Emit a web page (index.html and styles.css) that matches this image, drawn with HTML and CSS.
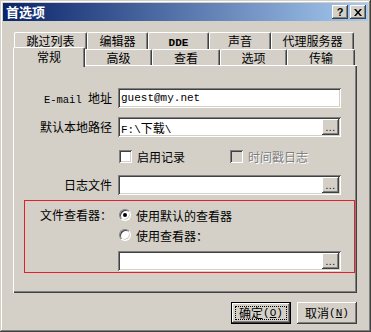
FILE: index.html
```html
<!DOCTYPE html>
<html lang="zh-CN">
<head>
    <meta charset="UTF-8">
    <meta name="viewport" content="width=device-width, initial-scale=1.0">
    <title>首选项</title>
    <link rel="stylesheet" href="styles.css">
</head>
<body>
    <div class="window">
        <div class="titlebar">
            <span class="title">首选项</span>
            <div class="title-buttons">
                <span class="title-btn help">?</span>
                <span class="title-btn">
                    <svg width="8" height="7" viewBox="0 0 8 7"><path d="M0 0h2l2 2.5L6 0h2L5 3.5 8 7H6L4 4.5 2 7H0l3-3.5z" fill="#000"/></svg>
                </span>
            </div>
        </div>

        <div class="tabs">
            <div class="tab-row back">
                <div class="tab">跳过列表</div>
                <div class="tab">编辑器</div>
                <div class="tab"><span class="en">DDE</span></div>
                <div class="tab">声音</div>
                <div class="tab">代理服务器</div>
            </div>
            <div class="tab-row front">
                <div class="tab active">常规</div>
                <div class="tab">高级</div>
                <div class="tab">查看</div>
                <div class="tab">选项</div>
                <div class="tab">传输</div>
            </div>
        </div>

        <div class="panel">
            <div class="form">
                <div class="label"><span class="en">E-mail </span>地址</div>
                <div class="field"><span class="value en">guest@my.net</span></div>

                <div class="label">默认本地路径</div>
                <div class="field">
                    <span class="value"><span class="en">F:\</span>下载<span class="en">\</span></span>
                    <span class="browse">...</span>
                </div>

                <div></div>
                <div class="checks">
                    <div class="check"><span class="box"></span>启用记录</div>
                    <div class="check disabled"><span class="box"></span>时间戳日志</div>
                </div>

                <div class="label">日志文件</div>
                <div class="field"><span class="value"></span><span class="browse">...</span></div>
            </div>

            <div class="viewer">
                <div class="label">文件查看器：</div>
                <div class="radio-row"><span class="radio checked"></span>使用默认的查看器</div>
                <div></div>
                <div class="radio-row"><span class="radio"></span>使用查看器：</div>
                <div></div>
                <div class="field viewer-field"><span class="value"></span><span class="browse">...</span></div>
            </div>
        </div>

        <div class="footer">
            <div class="button default"><span class="focus">确定<span class="en">(<u>O</u>)</span></span></div>
            <div class="button"><span class="focus plain">取消<span class="en">(<u>N</u>)</span></span></div>
        </div>
    </div>
</body>
</html>
```

FILE: styles.css
```css
body {
    margin: 0;
    background-color: #d4d0c8;
    font-family: "Noto Sans CJK SC", "DejaVu Sans", sans-serif;
    font-size: 12px;
    color: #000;
}

.en {
    font-family: "Liberation Mono", monospace;
    font-size: 11px;
}

.window {
    width: 371px;
    height: 332px;
    box-sizing: border-box;
    padding: 3px;
    display: flex;
    flex-direction: column;
    box-shadow: inset -1px -1px #404040, inset 1px 1px #d4d0c8, inset -2px -2px #808080, inset 2px 2px #fff;
}

/* title bar */
.titlebar {
    height: 18px;
    display: flex;
    align-items: center;
    justify-content: space-between;
    padding: 0 2px 0 3px;
    background: linear-gradient(to right, #0a246a, #a6caf0);
}

.title {
    color: #fff;
    font-weight: bold;
    font-size: 13px;
    line-height: 18px;
}

.title-buttons {
    display: flex;
    gap: 2px;
}

.title-btn {
    width: 16px;
    height: 14px;
    box-sizing: border-box;
    display: flex;
    align-items: center;
    justify-content: center;
    background-color: #d4d0c8;
    box-shadow: inset -1px -1px #404040, inset 1px 1px #fff, inset -2px -2px #808080;
}

.title-btn.help {
    font-family: "Liberation Sans", sans-serif;
    font-weight: bold;
    font-size: 11px;
    line-height: 14px;
}

/* tabs */
.tabs {
    margin-top: 11px;
    padding-left: 10px;
}

.tab-row {
    display: grid;
    height: 17px;
}

.tab-row.back {
    grid-template-columns: 73px 61px 61px 62px 83px;
    margin-left: 1px;
}

.tab-row.front {
    grid-template-columns: 72px 67px 68px 67px 68px;
    height: 16px;
}

.tab {
    box-sizing: border-box;
    height: 17px;
    text-align: center;
    line-height: 16px;
    border-top: 1px solid #fff;
    border-left: 1px solid #fff;
    border-right: 1px solid #404040;
    border-radius: 2px 2px 0 0;
    box-shadow: inset -1px 0 #808080;
    background-color: #d4d0c8;
}

.tab .en {
    font-weight: bold;
}

.front .tab {
    height: 16px;
    line-height: 15px;
}

.front .tab.active {
    position: relative;
    z-index: 1;
    height: 20px;
    margin-top: -2px;
    line-height: 17px;
}

/* panel */
.panel {
    margin-left: 10px;
    width: 344px;
    box-sizing: border-box;
    padding: 23px 0 20px 0;
    box-shadow: inset 1px 1px #fff, inset -1px -1px #404040, inset -2px -2px #808080;
}

.form {
    display: grid;
    grid-template-columns: 99px 223px;
    grid-auto-rows: 20px;
    column-gap: 6px;
    row-gap: 9px;
}

.label {
    text-align: right;
    line-height: 20px;
    white-space: nowrap;
}

.label .en {
    font-size: 10.5px;
}

.field {
    height: 20px;
    box-sizing: border-box;
    padding: 2px;
    display: flex;
    align-items: center;
    background-color: #fff;
    box-shadow: inset 1px 1px #808080, inset -1px -1px #fff, inset 2px 2px #404040, inset -2px -2px #d4d0c8;
}

.value {
    padding-left: 1px;
    flex: 1;
    white-space: nowrap;
}

.browse {
    width: 17px;
    height: 16px;
    box-sizing: border-box;
    background-color: #d4d0c8;
    font-family: "Liberation Sans", sans-serif;
    font-size: 10px;
    line-height: 18px;
    text-align: center;
    letter-spacing: 0.5px;
    box-shadow: inset -1px -1px #404040, inset 1px 1px #fff, inset -2px -2px #808080;
}

/* checkboxes */
.checks {
    display: flex;
    align-items: center;
}

.check {
    display: flex;
    align-items: center;
    gap: 5px;
    width: 110px;
    padding-left: 1px;
}

.box {
    width: 13px;
    height: 13px;
    box-sizing: border-box;
    background-color: #fff;
    box-shadow: inset 1px 1px #808080, inset -1px -1px #fff, inset 2px 2px #404040, inset -2px -2px #d4d0c8;
}

.check.disabled {
    color: #808080;
    text-shadow: 1px 1px #fff;
}

.check.disabled .box {
    background-color: #d4d0c8;
}

/* viewer group */
.viewer {
    margin: 5px 2px 0 11px;
    border: 1px solid #e0202c;
    padding: 4px 0 1px 0;
    display: grid;
    grid-template-columns: 87px 223px;
    grid-template-rows: 20px 20px 26px;
    column-gap: 6px;
    row-gap: 0;
}

.viewer-field {
    align-self: end;
}

.radio-row {
    display: flex;
    align-items: center;
    gap: 5px;
    padding-left: 1px;
}

.radio {
    width: 12px;
    height: 12px;
    box-sizing: border-box;
    border-radius: 50%;
    background-color: #fff;
    border: 1px solid;
    border-color: #808080 #fff #fff #808080;
    box-shadow: inset 1px 1px #404040, inset -1px -1px #d4d0c8;
    display: flex;
    align-items: center;
    justify-content: center;
}

.radio.checked::after {
    content: "";
    width: 4px;
    height: 4px;
    border-radius: 50%;
    background-color: #000;
}

/* buttons */
.footer {
    margin-top: 9px;
    padding-right: 11px;
    display: flex;
    justify-content: flex-end;
    gap: 6px;
}

.button {
    width: 60px;
    height: 22px;
    box-sizing: border-box;
    padding: 3px;
    display: flex;
    background-color: #d4d0c8;
    box-shadow: inset -1px -1px #404040, inset 1px 1px #fff, inset -2px -2px #808080;
}

.button.default {
    border: 1px solid #000;
    padding: 3px;
}

.focus {
    flex: 1;
    display: flex;
    align-items: center;
    justify-content: center;
    border: 1px dotted #000;
    line-height: 12px;
}

.focus.plain {
    border-color: transparent;
}
```
